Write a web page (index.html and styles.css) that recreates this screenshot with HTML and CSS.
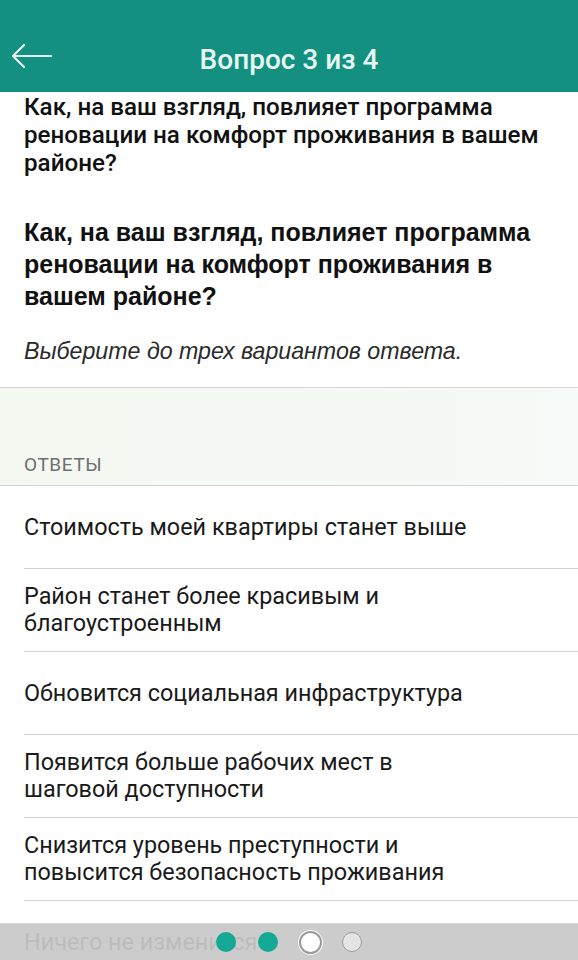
FILE: index.html
```html
<!DOCTYPE html>
<html lang="ru">
<head>
<meta charset="utf-8">
<title>Вопрос 3 из 4</title>
<link rel="stylesheet" href="styles.css">
</head>
<body>
<header class="header">
  <button class="back" aria-label="Назад">
    <svg width="42" height="26" viewBox="0 0 42 26" fill="none" stroke="#E8F6F2" stroke-width="2.2" stroke-linecap="round" stroke-linejoin="round">
      <path d="M2 13 H40"/>
      <path d="M13 2 L2 13 L13 24"/>
    </svg>
  </button>
  <h1 class="title">Вопрос 3 из 4</h1>
</header>

<main>
  <section class="question">
    <p class="q-plain">Как, на ваш взгляд, повлияет программа реновации на комфорт проживания в вашем районе?</p>
    <p class="q-bold">Как, на ваш взгляд, повлияет программа реновации на комфорт проживания в вашем районе?</p>
    <p class="q-hint">Выберите до трех вариантов ответа.</p>
  </section>

  <div class="section-head">ОТВЕТЫ</div>

  <ul class="answers">
    <li class="answer"><span>Стоимость моей квартиры станет выше</span></li>
    <li class="answer"><span>Район станет более красивым и<br>благоустроенным</span></li>
    <li class="answer"><span>Обновится социальная инфраструктура</span></li>
    <li class="answer"><span>Появится больше рабочих мест в<br>шаговой доступности</span></li>
    <li class="answer"><span>Снизится уровень преступности и<br>повысится безопасность проживания</span></li>
    <li class="answer"><span>Ничего не изменится</span></li>
  </ul>
</main>

<div class="pager">
  <span class="slot"><span class="dot dot-done"></span></span>
  <span class="slot"><span class="dot dot-done"></span></span>
  <span class="slot"><span class="dot dot-current"></span></span>
  <span class="slot"><span class="dot dot-next"></span></span>
</div>
</body>
</html>
```

FILE: styles.css
```css
html, body {
  margin: 0;
  padding: 0;
  background: #ffffff;
}

body {
  width: 578px;
  font-family: Roboto, "Noto Sans", sans-serif;
  color: #111111;
}

.header {
  height: 92px;
  box-sizing: border-box;
  padding-top: 28px;
  background: #13907f;
  display: flex;
  align-items: center;
  position: relative;
}

.back {
  position: absolute;
  left: 11px;
  top: 43px;
  padding: 0;
  margin: 0;
  border: 0;
  background: none;
  display: flex;
}

.title {
  flex: 1;
  margin: 0;
  text-align: center;
  font-family: Roboto, "Noto Sans", sans-serif;
  font-weight: 500;
  font-size: 28px;
  line-height: 64px;
  color: #e8f6f2;
}

.question {
  padding: 1px 24px 20px;
  border-bottom: 1px solid #d6d6d6;
}

.question p {
  margin: 0;
}

.q-plain {
  font-family: Roboto, "Noto Sans", sans-serif;
  font-weight: 500;
  font-size: 24.2px;
  line-height: 28px;
  color: #111111;
}

.q-bold {
  margin-top: 39px !important;
  font-family: "Liberation Sans", Arial, sans-serif;
  font-weight: 700;
  font-size: 25px;
  line-height: 32px;
  color: #111111;
}

.q-hint {
  margin-top: 23px !important;
  font-family: "Liberation Sans", Arial, sans-serif;
  font-style: italic;
  font-size: 23.2px;
  line-height: 32px;
  color: #2a2a2a;
}

.section-head {
  height: 98px;
  box-sizing: border-box;
  padding: 0 24px 10px;
  display: flex;
  align-items: flex-end;
  background: linear-gradient(90deg, #f3f8f1 0%, #f4f9f3 50%, #f6faf8 100%);
  border-bottom: 1px solid #d6d6d6;
  font-family: Roboto, "Noto Sans", sans-serif;
  font-size: 19px;
  letter-spacing: 0.6px;
  line-height: 20px;
  color: #6f6f6f;
}

.answers {
  list-style: none;
  margin: 0;
  padding: 0 0 0 24px;
}

.answer {
  min-height: 82px;
  border-bottom: 1px solid #d3d3d3;
  display: flex;
  align-items: center;
  font-family: Roboto, "Noto Sans", sans-serif;
  font-size: 23.4px;
  line-height: 27px;
  color: #1a1a1a;
}

.pager {
  position: fixed;
  left: 0;
  right: 0;
  bottom: 0;
  height: 36px;
  background: rgba(200, 200, 200, 0.93);
  border-top: 1px solid rgba(220, 220, 220, 0.9);
  display: flex;
  justify-content: center;
  align-items: center;
}

.slot {
  width: 42px;
  display: flex;
  justify-content: center;
  align-items: center;
}

.dot {
  display: block;
  border-radius: 50%;
  box-sizing: border-box;
}

.dot-done {
  width: 20px;
  height: 20px;
  background: #14a994;
}

.dot-current {
  width: 23px;
  height: 23px;
  background: #ffffff;
  border: 2px solid #9a9a9a;
  box-shadow: 0 0 0 1px #ffffff;
}

.dot-next {
  width: 20px;
  height: 20px;
  background: #e4e4e4;
  border: 1px solid #9a9a9a;
}
```
